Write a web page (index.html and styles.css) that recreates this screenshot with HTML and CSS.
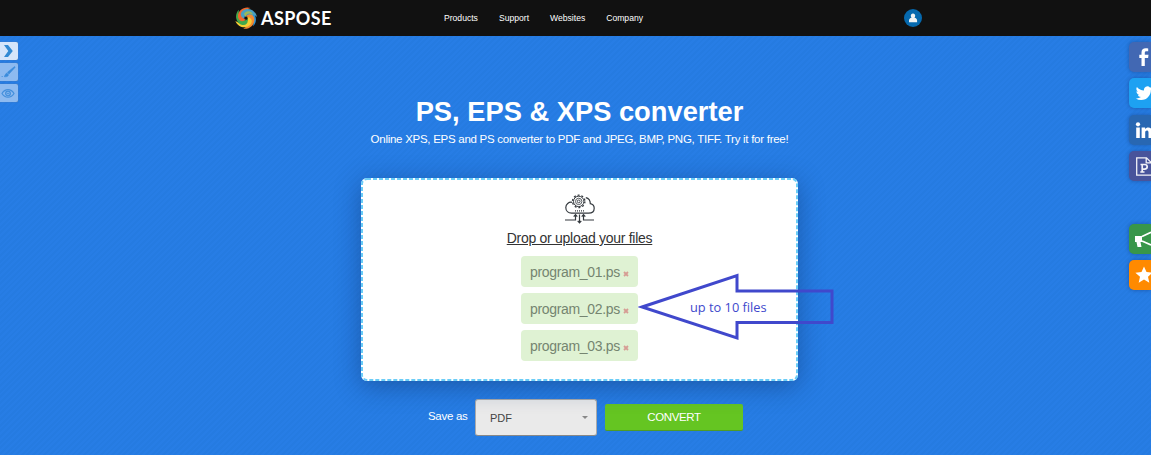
FILE: index.html
```html
<!DOCTYPE html>
<html lang="en">
<head>
<meta charset="utf-8">
<title>PS, EPS &amp; XPS converter</title>
<link rel="stylesheet" href="styles.css">
</head>
<body>
<header class="topbar">
  <a class="brand">
    <svg class="brand-mark" viewBox="-12 -12 24 24">
      <defs><path id="blade" d="M7-8.500C1-12.500-7-9-7.500-2.500C-7.700 1.500-4 3.500-.5 1.500C-4.500-.5-3-8 7-8.500Z"/></defs>
      <use href="#blade" fill="#2f94d4" transform="rotate(100)"/>
      <use href="#blade" fill="#f28a32" transform="rotate(155)"/>
      <use href="#blade" fill="#f5ce32" transform="rotate(215)"/>
      <use href="#blade" fill="#42a94c" transform="rotate(280)"/>
      <use href="#blade" fill="#f0682c" transform="rotate(-15)"/>
      <use href="#blade" fill="#4a9fc0" transform="rotate(45)"/>
      <path d="M-2-4C0-8 6-7.500 7-2.500 4-5.500 1-5-.5-1z" fill="#9cb956"/>
    </svg>
    <span class="brand-name">ASPOSE</span>
  </a>
  <nav class="nav"><a>Products</a><a>Support</a><a>Websites</a><a>Company</a></nav>
  <span class="user">
    <svg viewBox="0 0 18 18"><path d="M9 4.400c1.500 0 2.200 1.100 2.200 2.400 0 .8-.3 1.500-.7 2 1.600.3 2.600 1.200 2.600 2.600v1.800H5v-1.800c0-1.400 1-2.300 2.500-2.600-.4-.5-.7-1.200-.7-2 0-1.300.7-2.400 2.200-2.400z" fill="#f1f3f3"/></svg>
  </span>
</header>
<main class="hero">
  <h1 class="title">PS, EPS &amp; XPS converter</h1>
  <p class="subtitle">Online XPS, EPS and PS converter to PDF and JPEG, BMP, PNG, TIFF. Try it for free!</p>
  <section class="dropzone">
    <svg class="zone-edge" viewBox="0 0 437 203"><rect x="1" y="1" width="435" height="201" rx="5"/></svg>
    <svg class="cloud" viewBox="0 0 30 30" fill="none" stroke="#34393e" stroke-width="1.200">
      <path d="M7 8.300C3.800 7.800.8 10 .8 13.600c0 3.300 2.500 5.600 5.800 5.600h17c3.300 0 5.600-2 5.600-4.900 0-2.500-1.500-4.100-3.900-4.600C25.300 6.500 23.500 4.200 20.800 3.600"/>
      <circle cx="13.700" cy="7.400" r="5.200" stroke-width="1"/>
      <circle cx="13.700" cy="7.400" r="6.200" stroke-width="1.300" stroke-dasharray="2 1.900"/>
      <circle cx="13.700" cy="7.400" r="3.200" stroke-width=".8"/>
      <circle cx="13.700" cy="7.400" r="1.400" stroke-width=".9"/>
      <path d="M10 16.800h9" stroke-dasharray="1 1"/>
      <path d="M0 26h10.500v-5M29 26H18.500v-5M14.500 20.500v8M8.700 22.600l1.800-1.900 1.800 1.900M16.700 22.600l1.800-1.900 1.800 1.900M12.700 26.900l1.800 1.900 1.800-1.900"/>
    </svg>
    <a class="upload">Drop or upload your files</a>
    <ul class="files">
      <li class="file"><span>program_01.ps</span><svg class="remove" viewBox="0 0 6 6"><path d="M1 1l4 4M5 1L1 5"/></svg></li>
      <li class="file"><span>program_02.ps</span><svg class="remove" viewBox="0 0 6 6"><path d="M1 1l4 4M5 1L1 5"/></svg></li>
      <li class="file"><span>program_03.ps</span><svg class="remove" viewBox="0 0 6 6"><path d="M1 1l4 4M5 1L1 5"/></svg></li>
    </ul>
    <div class="callout">
      <svg viewBox="0 0 196 68"><path d="M4 34L99 2.500V18H194V49.500H99V65Z"/></svg>
      <span class="callout-text">up to 10 files</span>
    </div>
  </section>
  <div class="actions">
    <span class="save-label">Save as</span>
    <div class="select"><span>PDF</span><i class="caret"></i></div>
    <button class="convert">CONVERT</button>
  </div>
</main>
<aside class="tools">
  <span class="tool tool-open"><svg viewBox="0 0 18 18"><path d="M4 3H8L12.800 9 8 15H4L8.300 9z" fill="#3189d3"/></svg></span>
  <span class="tool"><svg viewBox="0 0 18 18"><path d="M14.700 3.500L7.500 9.200 9 11l6-6.600zM6.800 10l1.700 1.800c-.5 1.900-2 2.200-4.500 1.800 1.400-.7 1-2.800 2.800-3.600zM1.500 13.500h1.500" fill="#3b8cdb" stroke="#3b8cdb" stroke-width=".6"/></svg></span>
  <span class="tool"><svg viewBox="0 0 18 18" fill="none" stroke="#438fdc"><path d="M2 9.500C5 4.400 11 4.400 14 9.500 11 14.500 5 14.500 2 9.500z" stroke-width="1.200"/><circle cx="8" cy="9.500" r="2.300" stroke-width="1.300"/><circle cx="8" cy="9.500" r=".6"/></svg></span>
</aside>
<aside class="share">
  <span class="tile facebook"><svg viewBox="0 0 22 30"><path d="M12.500 24v-8.100H10.300v-3.100h2.200v-2.400c0-2.800 1.700-4.200 4.200-4.200 1.200 0 2.200.1 2.500.2v2.900h-1.700c-1.400 0-1.700.7-1.700 1.600v1.900H19.500l-.4 3.100h-3.300V24z" fill="#fff"/></svg></span>
  <span class="tile twitter"><svg viewBox="0 0 22 30"><path transform="translate(6.800 6.800) scale(.7)" d="M23.950 4.570a10 10 0 0 1-2.820.78 4.960 4.960 0 0 0 2.160-2.730c-.95.560-2 .96-3.130 1.190a4.920 4.920 0 0 0-8.380 4.480C7.690 8.090 4.070 6.130 1.640 3.160a4.920 4.920 0 0 0 1.520 6.570 4.900 4.900 0 0 1-2.230-.61v.06a4.920 4.920 0 0 0 3.950 4.830 5 5 0 0 1-2.210.08 4.940 4.940 0 0 0 4.600 3.420A9.870 9.870 0 0 1 0 19.540a14 14 0 0 0 7.550 2.210c9.050 0 14-7.500 14-13.980v-.64a9.940 9.940 0 0 0 2.400-2.560z" fill="#fff"/></svg></span>
  <span class="tile linkedin"><svg viewBox="0 0 22 30"><path d="M7.200 12.500h3.600v10.500H7.200zM12.600 12.500h3.500v1.500c1.300-2.200 7-2.500 7 2.500v6.500h-3.600v-5.500c0-2.700-3.300-2.400-3.300 0v5.500h-3.600z" fill="#fff"/><circle cx="9" cy="9.300" r="2.100" fill="#fff"/></svg></span>
  <span class="tile publish"><svg viewBox="0 0 22 30" fill="none" stroke="#f2f2f7"><path d="M22 24.200H7.700V6.800H17.500l4.500 4.500M17.200 6.800v5H22" stroke-width="1.300"/><path d="M11.500 13.500h4c3.600 0 3.600 4.600 0 4.600h-2M13.200 13.500v7.400M11.300 21h4.200" stroke-width="1.700"/></svg></span>
  <span class="tile announce"><svg viewBox="0 0 22 30" fill="#fff"><path d="M6 12h7v6h-1.500l1 5H8.500l-1-5H6z"/><path d="M13 12.500l9-4.300M13 17l9 4" fill="none" stroke="#fff" stroke-width="1.700"/></svg></span>
  <span class="tile star"><svg viewBox="0 0 22 30"><path d="M15 6.500l2.500 5.600 6.100.6-4.600 4 1.300 6-5.300-3.100-5.300 3.100 1.300-6-4.600-4 6.100-.6z" fill="#fff"/></svg></span>
</aside>
</body>
</html>
```
FILE: styles.css
```css
* { box-sizing: border-box; }
body {
  margin: 0;
  height: 455px;
  overflow: hidden;
  font-family: "Liberation Sans", Arial, sans-serif;
  color: #fff;
  background: repeating-linear-gradient(135deg, #257be1 0 2px, #277de5 2px 4px);
}
.topbar {
  height: 36px;
  padding-left: 235px;
  display: flex;
  align-items: center;
  background: #111;
}
.brand { display: flex; align-items: center; width: 209px; }
.brand-mark { width: 24px; height: 24px; margin-left: -1px; flex: none; }
.brand-name { margin-left: 3px; font: 700 18px/20px Lato, sans-serif; letter-spacing: .4px; }
.nav { width: 460px; display: flex; gap: 21px; font-size: 8.600px; line-height: 12px; }
.user { width: 18px; height: 18px; border-radius: 50%; background: #0669ae; }
.user svg, .tool svg, .tile svg, .callout svg { display: block; width: 100%; height: 100%; }
.hero { display: flex; flex-direction: column; align-items: center; padding: 60px 0 0 8px; }
.title { margin: 0; font-size: 27.300px; line-height: 32px; white-space: nowrap; }
.subtitle { margin: 3px 0 0; font-size: 11.500px; line-height: 17px; letter-spacing: -.27px; white-space: nowrap; }
.dropzone {
  position: relative;
  width: 437px;
  height: 203px;
  margin-top: 30px;
  padding-top: 16px;
  display: flex;
  flex-direction: column;
  align-items: center;
  border-radius: 6px;
  background: #fff;
  box-shadow: 0 5px 26px rgba(15, 50, 105, .48);
}
.zone-edge { position: absolute; inset: 0; width: 437px; height: 203px; }
.zone-edge rect { fill: none; stroke: #6bcdf7; stroke-width: 2; stroke-dasharray: 4 2; }
.cloud { width: 30px; height: 30px; }
.upload { margin-top: 5px; font-size: 14px; letter-spacing: -.28px; line-height: 18px; color: #333; text-decoration: underline; white-space: nowrap; }
.files { list-style: none; margin: 9px 0 0; padding: 0; display: flex; flex-direction: column; gap: 6px; }
.file {
  width: 117px;
  height: 31px;
  padding-left: 9px;
  display: flex;
  align-items: center;
  border-radius: 4px;
  background: #dff2d3;
  color: #758570;
  font-size: 14px;
  letter-spacing: -.33px;
}
.remove { width: 6px; height: 6px; margin: 4px 0 0 3px; fill: none; stroke: #d69d94; stroke-width: 1.800; }
.callout { position: absolute; left: 277px; top: 95px; width: 196px; height: 68px; }
.callout path { fill: none; stroke: #4048cc; stroke-width: 3; }
.callout-text {
  position: absolute;
  left: 52px;
  top: 25px;
  font: 12.800px/18px "Open Sans", sans-serif;
  color: #4048cc;
  white-space: nowrap;
}
.actions { display: flex; align-items: center; margin: 18px 0 0 12px; }
.save-label { width: 47px; margin-top: -3px; font-size: 11.500px; letter-spacing: -.3px; white-space: nowrap; }
.select {
  width: 122px;
  height: 37px;
  padding: 0 8px 0 14px;
  display: flex;
  align-items: center;
  justify-content: space-between;
  border: 1px solid #aaa;
  border-bottom-color: #888;
  border-radius: 3px;
  background: #eaeaea;
  color: #444;
  font-size: 11px;
}
.caret { border: 3px solid transparent; border-top: 3px solid #888; border-bottom: 0; }
.convert {
  width: 138px;
  height: 27px;
  margin-left: 8px;
  padding: 0;
  border: 0;
  border-bottom: 1px solid #4f9b26;
  border-radius: 2px;
  background: #65c522;
  color: #fff;
  font: 11.500px "Liberation Sans", sans-serif;
  letter-spacing: -.35px;
}
.tools { position: absolute; left: 0; top: 42px; display: grid; gap: 3px; }
.tool { width: 18px; height: 18px; border-radius: 0 2px 2px 0; background: #8dbaf0; box-shadow: 0 0 1px #777; }
.tool-open { background: #d5e5fa; }
.share { position: absolute; right: 0; top: 42px; display: grid; gap: 6.300px; }
.tile { width: 22px; height: 30px; border-radius: 5px 0 0 5px; overflow: hidden; box-shadow: 0 0 4px rgba(0, 0, 40, .3); }
.facebook { background: #4268b3; }
.twitter { background: #1da1f2; }
.linkedin { background: #2867b2; }
.publish { background: #48549b; }
.announce { margin-top: 36.500px; background: #38964a; }
.star { background: #ff8a00; }
```
